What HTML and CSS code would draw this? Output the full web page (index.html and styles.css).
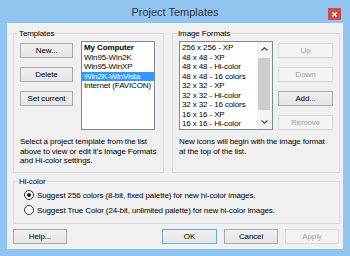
FILE: index.html
```html
<!DOCTYPE html>
<html lang="en">
<head>
	<meta charset="UTF-8">
	<title>Project Templates</title>
	<link rel="stylesheet" href="styles.css">
</head>
<body>
	<div class="window">
		<div class="titlebar">
			<span class="title">Project Templates</span>
			<span class="close">
				<svg width="5" height="5" viewBox="0 0 5 5"><path d="M0.5 0.5L4.5 4.5M4.5 0.5L0.5 4.5" stroke="#fff" stroke-width="1.2"/></svg>
			</span>
		</div>
		<div class="client">
			<div class="top-row">
				<div class="group templates">
					<span class="legend">Templates</span>
					<div class="group-row">
						<div class="btn-col">
							<div class="btn">New...</div>
							<div class="btn">Delete</div>
							<div class="btn">Set current</div>
						</div>
						<ul class="listbox tpl-list">
							<li class="bold">My Computer</li>
							<li>Win95-Win2K</li>
							<li>Win95-WinXP</li>
							<li class="selected">Win2K-WinVista</li>
							<li>Internet (FAVICON)</li>
						</ul>
					</div>
					<p class="note">Select a project template from the list<br>above to view or edit it's Image Formats<br>and Hi-color settings.</p>
				</div>
				<div class="group formats">
					<span class="legend">Image Formats</span>
					<div class="group-row">
						<div class="listbox fmt-list">
							<ul class="items">
								<li>256 x 256 - XP</li>
								<li>48 x 48 - XP</li>
								<li>48 x 48 - Hi-color</li>
								<li>48 x 48 - 16 colors</li>
								<li>32 x 32 - XP</li>
								<li>32 x 32 - Hi-color</li>
								<li>32 x 32 - 16 colors</li>
								<li>16 x 16 - XP</li>
								<li>16 x 16 - Hi-color</li>
							</ul>
							<div class="scrollbar">
								<div class="arrow">
									<svg width="7" height="4" viewBox="0 0 7 4"><path d="M0.5 3.5L3.5 0.8L6.5 3.5" fill="none" stroke="#444" stroke-width="1.1"/></svg>
								</div>
								<div class="track"><div class="thumb"></div></div>
								<div class="arrow">
									<svg width="7" height="4" viewBox="0 0 7 4"><path d="M0.5 0.5L3.5 3.2L6.5 0.5" fill="none" stroke="#444" stroke-width="1.1"/></svg>
								</div>
							</div>
						</div>
						<div class="btn-col wide">
							<div class="btn disabled">Up</div>
							<div class="btn disabled">Down</div>
							<div class="btn">Add...</div>
							<div class="btn disabled">Remove</div>
						</div>
					</div>
					<p class="note">New icons will begin with the image format<br>at the top of the list.</p>
				</div>
			</div>
			<div class="group hicolor">
				<span class="legend">Hi-color</span>
				<div class="radio-row"><span class="radio checked"></span>Suggest 256 colors (8-bit, fixed palette) for new hi-color images.</div>
				<div class="radio-row"><span class="radio"></span>Suggest True Color (24-bit, unlimited palette) for new hi-color images.</div>
			</div>
			<div class="footer">
				<div class="btn">Help...</div>
				<div class="btn default push">OK</div>
				<div class="btn">Cancel</div>
				<div class="btn disabled">Apply</div>
			</div>
		</div>
	</div>
</body>
</html>
```

FILE: styles.css
```css
*{
	margin:0;
	padding:0;
	box-sizing:border-box;
}
ul{
	list-style-type:none;
}
body{
	font-family:"Liberation Sans", Arial, sans-serif;
	font-size:8px;
	letter-spacing:-0.12px;
	color:#000;
	background:#92c5f0;
}
.window{
	width:350px;
	height:256px;
	background:#92c5f0;
	padding:0 7px 7px 7px;
	display:flex;
	flex-direction:column;
}
.titlebar{
	height:23px;
	display:grid;
	grid-template-columns:1fr auto 1fr;
	align-items:center;
}
.title{
	grid-column:2;
	font-size:11px;
	letter-spacing:0;
	color:#333;
	padding-top:1px;
}
.close{
	grid-column:3;
	justify-self:end;
	align-self:start;
	margin:8px 2px 0 0;
	width:13px;
	height:12px;
	background:#c75050;
	display:flex;
	align-items:center;
	justify-content:center;
}
.client{
	flex:1;
	background:#f0f0f0;
	padding:10px 3px 0 6px;
	display:flex;
	flex-direction:column;
}
.top-row{
	display:flex;
	gap:8px;
	height:140px;
}
.group{
	border:1px solid #dcdcdc;
	position:relative;
}
.legend{
	position:absolute;
	top:-6px;
	left:4px;
	padding:0 1px;
	background:#f0f0f0;
	line-height:11px;
}
.templates{
	width:151px;
	padding:7px 8px 0 6px;
}
.formats{
	flex:1;
	padding:7px 6px 0 6px;
}
.group-row{
	display:flex;
	gap:8px;
}
.formats .group-row{
	gap:5px;
}
.btn-col{
	width:53px;
	padding-top:2px;
	display:flex;
	flex-direction:column;
	gap:9px;
}
.btn-col.wide{
	width:55px;
}
.btn{
	height:15px;
	width:100%;
	border:1px solid #acacac;
	background:linear-gradient(#f0f0f0, #e5e5e5);
	text-align:center;
	line-height:13px;
}
.btn.disabled{
	border-color:#d9d9d9;
	background:#f4f4f4;
	color:#a0a0a0;
}
.btn.default{
	border-color:#6fa8e0;
}
.listbox{
	height:89px;
	background:#fff;
	border:1px solid #828790;
	padding-top:1px;
}
.listbox li{
	line-height:9.5px;
	padding-left:2px;
	white-space:nowrap;
}
.tpl-list{
	width:74px;
}
.tpl-list li.bold{
	font-weight:bold;
}
.tpl-list li.selected{
	background:#3399ff;
	color:#fff;
}
.fmt-list{
	width:94px;
	display:flex;
	padding-top:0;
}
.fmt-list .items{
	flex:1;
	padding-top:1px;
}
.scrollbar{
	width:15px;
	display:flex;
	flex-direction:column;
	background:#f4f4f4;
}
.arrow{
	height:14px;
	display:flex;
	align-items:center;
	justify-content:center;
}
.track{
	flex:1;
	padding:2px 2px 0 1px;
}
.thumb{
	height:52px;
	background:#cdcdcd;
}
.note{
	margin-top:7px;
	line-height:9.5px;
	white-space:nowrap;
}
.hicolor{
	margin-top:8px;
	height:43px;
	padding:8px 0 0 10px;
	display:flex;
	flex-direction:column;
	gap:5px;
}
.radio-row{
	height:10px;
	display:flex;
	align-items:center;
	gap:3px;
	white-space:nowrap;
}
.radio{
	width:10px;
	height:10px;
	border:1px solid #333;
	border-radius:50%;
	background:#fff;
	display:flex;
	align-items:center;
	justify-content:center;
}
.radio.checked::after{
	content:"";
	width:4px;
	height:4px;
	border-radius:50%;
	background:#222;
}
.footer{
	margin-top:5px;
	margin-right:1px;
	display:flex;
	gap:7px;
}
.footer .btn{
	width:54px;
}
.footer .push{
	margin-left:auto;
	width:55px;
}
```
